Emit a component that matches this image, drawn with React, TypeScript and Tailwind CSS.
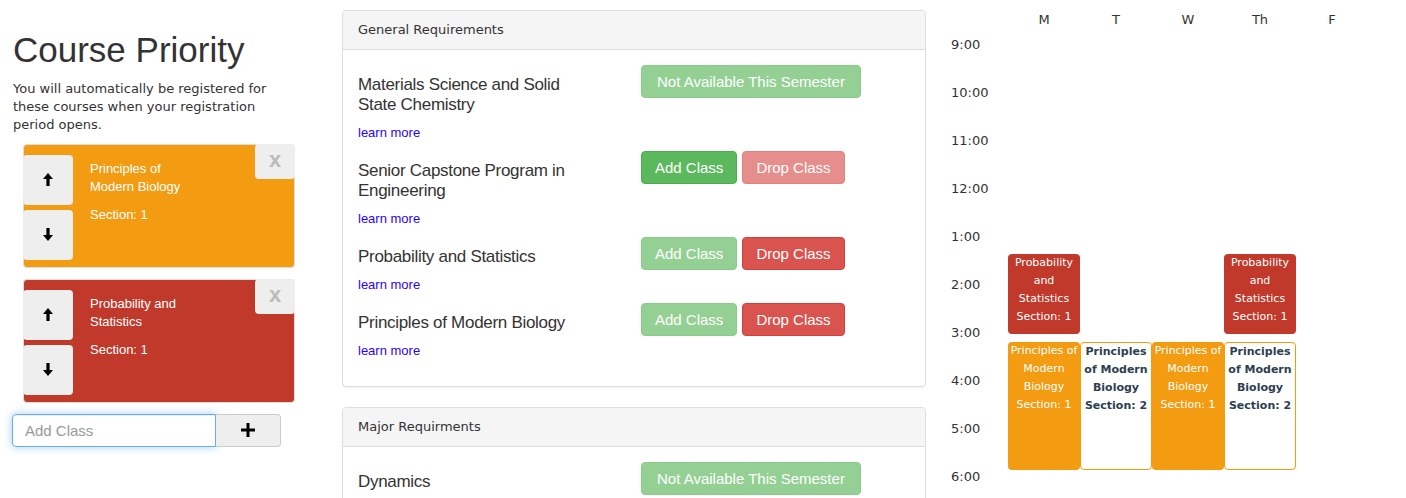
import React from "react";

type Course = {
  name: string;
  section: number;
  color: string;
};

type Req = {
  name: string;
  status: "na" | "add" | "drop";
};

const priority: Course[] = [
  { name: "Principles of Modern Biology", section: 1, color: "bg-[#f39c12]" },
  { name: "Probability and Statistics", section: 1, color: "bg-[#c0392b]" },
];

const general: Req[] = [
  { name: "Materials Science and Solid State Chemistry", status: "na" },
  { name: "Senior Capstone Program in Engineering", status: "add" },
  { name: "Probability and Statistics", status: "drop" },
  { name: "Principles of Modern Biology", status: "drop" },
];

const major: Req[] = [{ name: "Dynamics", status: "na" }];

const days = ["M", "T", "W", "Th", "F"];
const hours = ["9:00", "10:00", "11:00", "12:00", "1:00", "2:00", "3:00", "4:00", "5:00", "6:00"];

const Arrow = ({ down }: { down?: boolean }) => (
  <svg width="10" height="13" viewBox="0 0 10 13" className={down ? "rotate-180" : ""}>
    <path d="M5 0 L10 6 H6.6 V13 H3.4 V6 H0 Z" fill="#000" />
  </svg>
);

const PriorityCard = ({ course }: { course: Course }) => (
  <div className={`flex h-[124px] w-[272px] rounded-[4px] border border-[#ddd] ${course.color}`}>
    <div className="-ml-px flex flex-col gap-[5px] pt-[10px]">
      <button className="flex h-[50px] w-[50px] items-center justify-center rounded-[4px] bg-[#eee]">
        <Arrow />
      </button>
      <button className="flex h-[50px] w-[50px] items-center justify-center rounded-[4px] bg-[#eee]">
        <Arrow down />
      </button>
    </div>
    <div className="ml-[17px] w-[115px] pt-[15px] text-[13px] leading-[18px] text-white">
      <div>{course.name}</div>
      <div className="mt-[10px]">Section: {course.section}</div>
    </div>
    <button className="-mr-px -mt-px ml-auto flex h-[35px] w-[40px] items-center justify-center rounded-[4px] bg-[#eee] pb-[3px] font-['Liberation_Sans',sans-serif] text-[22px] font-bold leading-none text-[#bbb]">
      x
    </button>
  </div>
);

const btn = "rounded-[4px] border px-[13px] py-[5px] text-[15px] leading-[21px] text-white";

const ReqItem = ({ req }: { req: Req }) => (
  <div className="mb-[8px] flex">
    <div className="w-[283px] shrink-0">
      <h4 className="mt-[10px] w-[240px] text-[17px] leading-[20px] tracking-[-0.3px] text-[#333]">
        {req.name}
      </h4>
      <a className="mt-[8px] block text-[13px] leading-[20px] text-[#2b00ff]" href="#">
        learn more
      </a>
    </div>
    <div className="flex items-start gap-[5px]">
      {req.status === "na" ? (
        <button className={`${btn} border-[#4cae4c] bg-[#5cb85c] px-[15px] opacity-65`}>
          Not Available This Semester
        </button>
      ) : (
        <>
          <button
            className={`${btn} border-[#4cae4c] bg-[#5cb85c] ${req.status === "add" ? "" : "opacity-65"}`}
          >
            Add Class
          </button>
          <button
            className={`${btn} border-[#d43f3a] bg-[#d9534f] ${req.status === "drop" ? "" : "opacity-65"}`}
          >
            Drop Class
          </button>
        </>
      )}
    </div>
  </div>
);

const Panel = ({ title, items }: { title: string; items: Req[] }) => (
  <div className="mb-[20px] rounded-[4px] border border-[#ddd] bg-white shadow-[0_1px_1px_rgba(0,0,0,0.05)]">
    <div className="rounded-t-[3px] border-b border-[#ddd] bg-[#f5f5f5] px-[15px] py-[10px] font-['DejaVu_Sans',sans-serif] text-[13px] leading-[18px] text-[#333]">
      {title}
    </div>
    <div className="px-[15px] pb-[17px] pt-[15px]">
      {items.map((r) => (
        <ReqItem key={r.name} req={r} />
      ))}
    </div>
  </div>
);

type Ev = { day: number; top: number; height: number; text: string; kind: "red" | "orange" | "white" };

const events: Ev[] = [
  { day: 0, top: 219, height: 80, text: "Probability and Statistics Section: 1", kind: "red" },
  { day: 3, top: 219, height: 80, text: "Probability and Statistics Section: 1", kind: "red" },
  { day: 0, top: 307, height: 128, text: "Principles of Modern Biology Section: 1", kind: "orange" },
  { day: 1, top: 307, height: 128, text: "Principles of Modern Biology Section: 2", kind: "white" },
  { day: 2, top: 307, height: 128, text: "Principles of Modern Biology Section: 1", kind: "orange" },
  { day: 3, top: 307, height: 128, text: "Principles of Modern Biology Section: 2", kind: "white" },
];

const evStyle = {
  red: "bg-[#c0392b] text-white",
  orange: "bg-[#f39c12] text-white",
  white: "border border-[#f39c12] bg-white font-bold text-[#2c3e50]",
};

const Calendar = () => (
  <div className="pl-[25px] pt-[11px] font-['DejaVu_Sans',sans-serif] text-[13px] leading-[18px] text-[#333]">
    <div className="flex">
      <div className="w-[57px] shrink-0" />
      {days.map((d) => (
        <div key={d} className="w-[72px] text-center">
          {d}
        </div>
      ))}
    </div>
    <div className="relative mt-[6px]">
      {hours.map((h) => (
        <div key={h} className="h-[48px] pt-px">
          {h}
        </div>
      ))}
      {events.map((e, i) => (
        <div
          key={i}
          className={`absolute w-[72px] rounded-[4px] text-center text-[11px] leading-[18px] ${evStyle[e.kind]}`}
          style={{ left: 57 + e.day * 72, top: e.top, height: e.height }}
        >
          {e.text}
        </div>
      ))}
    </div>
  </div>
);

export default function App() {
  return (
    <div className="flex h-[498px] w-[1406px] overflow-hidden bg-white font-['Liberation_Sans',Arial,sans-serif] text-[#333]">
      <div className="w-[342px] shrink-0 pl-[13px] pt-[30px]">
        <h1 className="text-[35px] leading-[39.6px]">Course Priority</h1>
        <p className="mt-[10px] w-[275px] font-['DejaVu_Sans',sans-serif] text-[13px] leading-[18px]">
          You will automatically be registered for these courses when your registration period opens.
        </p>
        <div className="ml-[10px] mt-[10px] flex flex-col gap-[11px]">
          {priority.map((c) => (
            <PriorityCard key={c.name} course={c} />
          ))}
        </div>
        <div className="-ml-px mt-[11px] flex">
          <input
            autoFocus
            placeholder="Add Class"
            className="h-[33px] w-[204px] rounded-l-[4px] border border-[#66afe9] px-[12px] text-[15px] text-[#555] shadow-[inset_0_1px_1px_rgba(0,0,0,0.075),0_0_8px_rgba(102,175,233,0.6)] outline-none placeholder:text-[#999]"
          />
          <button className="flex h-[33px] w-[65px] items-center justify-center rounded-r-[4px] border border-l-0 border-[#ccc] bg-[#eee]">
            <svg width="14" height="14" viewBox="0 0 14 14">
              <path d="M5.5 0 H8.5 V5.5 H14 V8.5 H8.5 V14 H5.5 V8.5 H0 V5.5 H5.5 Z" fill="#000" />
            </svg>
          </button>
        </div>
      </div>
      <div className="w-[584px] shrink-0 pt-[10px]">
        <Panel title="General Requirements" items={general} />
        <Panel title="Major Requirments" items={major} />
      </div>
      <div className="flex-1">
        <Calendar />
      </div>
    </div>
  );
}
